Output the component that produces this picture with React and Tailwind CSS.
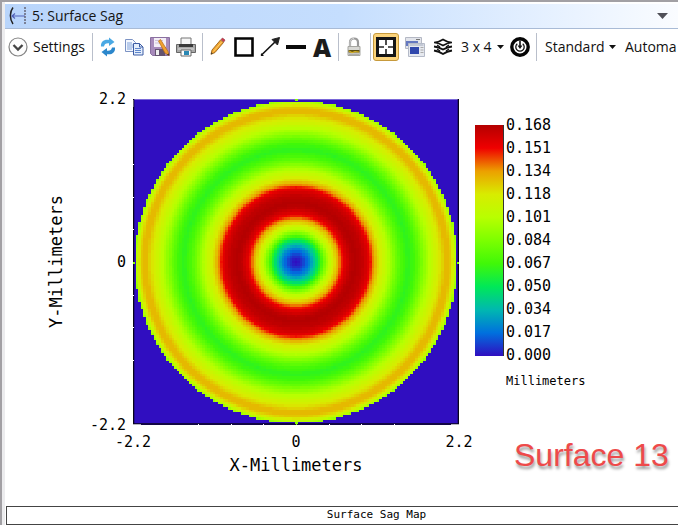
import React from "react";

const COLORS = [
  [48, 14, 192],
  [0, 112, 222],
  [0, 184, 176],
  [0, 232, 88],
  [64, 248, 8],
  [124, 255, 0],
  [184, 255, 0],
  [216, 236, 0],
  [236, 160, 0],
  [240, 0, 0],
  [180, 0, 0],
];

const LEGEND = ["0.168", "0.151", "0.134", "0.118", "0.101", "0.084", "0.067", "0.050", "0.034", "0.017", "0.000"];

// Radial sag profile: [radius, level], radius in 1/163 of the half width.
const PROFILE = [
  [0, 0], [3, 0.1], [8, 0.6], [12, 1.1], [16, 1.8], [20, 2.6], [24, 3.6], [28, 4.8],
  [33, 6.1], [38, 7.1], [42, 7.8], [46, 8.8], [50, 9.4], [55, 9.9], [59, 10], [66, 9.8],
  [71, 9.4], [74, 9], [77, 8.2], [81, 7.4], [86, 6.7], [93, 5.8], [100, 4.8],
  [106, 4.1], [112, 3.7], [118, 4], [124, 4.7], [132, 5.8], [140, 6.7], [146, 7.3],
  [149, 7.7], [153, 7.7], [156, 7.2], [158, 6.7], [161, 5.5], [170, 5],
];

function levelAt(r) {
  for (let i = 1; i < PROFILE.length; i++) {
    const [r1, v1] = PROFILE[i];
    const [r0, v0] = PROFILE[i - 1];
    if (r <= r1) return v0 + ((v1 - v0) * (r - r0)) / (r1 - r0);
  }
  return 5;
}

function colorAt(v) {
  const i = Math.min(9, Math.floor(v));
  const f = v - i;
  const c = COLORS[i].map((a, k) => Math.round(a + (COLORS[i + 1][k] - a) * f));
  return `rgb(${c.join(",")})`;
}

const N = 127;
const CELLS = (() => {
  const groups = {};
  for (let y = 0; y < N; y++) {
    for (let x = 0; x < N; x++) {
      const r = (Math.hypot(x - 63, y - 63) * 163) / 63.5;
      if (r > 161.5) continue;
      const q = Math.round(levelAt(r) * 12);
      groups[q] = (groups[q] || "") + `M${x} ${y}h1v1h-1z`;
    }
  }
  return Object.entries(groups);
})();

function SagMap() {
  const ticks = [0.2, 0.3, 0.4, 0.5, 0.6, 0.7, 0.8];
  return (
    <svg viewBox="0 0 326 326" className="block w-full" role="img" aria-label="Surface sag map">
      <rect width="326" height="326" fill="#300ec0" />
      <g transform={`scale(${326 / N})`} shapeRendering="crispEdges">
        {CELLS.map(([q, d]) => (
          <path key={q} d={d} fill={colorAt(q / 12)} />
        ))}
      </g>
      <path d="M0 .5H326" stroke="#7a68d8" />
      <path d="M.5 0V326M325.5 0V326M0 325H326" stroke="#08041c" strokeWidth="1.6" fill="none" />
      <path d="M0 1V8M0 325.5H8M318 325.5H326" stroke="#b4b4bc" strokeWidth="1" />
      {ticks.map((t) => (
        <g key={t} fill={t === 0.5 ? "#8f0" : "#fff"}>
          <rect x={Math.round(t * 326)} y="325" width="1" height="1" />
          <rect x="0" y={Math.round(t * 326)} width="1" height="1" />
        </g>
      ))}
      <path d="M162 1h3M0 164h2M324 164h2M162 324h3" stroke="#8f0" strokeWidth="2" />
    </svg>
  );
}

function Icon({ size = 20, children }) {
  return (
    <svg width={size} height={size} viewBox="0 0 20 20" fill="none" aria-hidden="true">
      {children}
    </svg>
  );
}

function ToolButton({ label, active, children }) {
  return (
    <button
      type="button"
      aria-label={label}
      className={
        active
          ? "flex h-7 w-[26px] shrink-0 items-center justify-center rounded-[3px] border border-[#c79a3c] bg-[#fbd37a]"
          : "flex h-7 w-[26px] shrink-0 items-center justify-center"
      }
    >
      {children}
    </button>
  );
}

function Separator() {
  return <div className="mr-[2px] ml-[3px] h-7 w-px shrink-0 bg-[#b9bfcb]" />;
}

function Caret() {
  return (
    <svg width="7" height="4" viewBox="0 0 7 4" aria-hidden="true">
      <path d="M0 0h7L3.500 4z" fill="#111" />
    </svg>
  );
}

function Toolbar() {
  return (
    <div className="flex h-[35px] items-center overflow-hidden pl-[3px] text-sm whitespace-nowrap text-[#111]">
      <button type="button" className="flex shrink-0 items-center gap-[5px] pr-[2px]">
        <Icon>
          <circle cx="10" cy="10" r="9" fill="#fdfdfd" stroke="#858585" strokeWidth="1.200" />
          <path d="M5.500 8l4.500 4.500L14.500 8" stroke="#444" strokeWidth="2.300" />
        </Icon>
        <span className="w-[54px] text-left">Settings</span>
      </button>
      <Separator />
      <ToolButton label="Refresh">
        <Icon>
          <path d="M3 9.500C2.500 4.500 6 2 11 2.800V.500l5.500 4.500L11 9V6.300C8 6 6.500 7 6 9.500z" fill="#4aa9e4" />
          <path d="M17 10.500c.500 5-3 7.500-8 6.700v2.300L3.500 15 9 11v2.700c3 .300 4.500-.700 5-3.200z" fill="#2b87cc" />
        </Icon>
      </ToolButton>
      <ToolButton label="Copy">
        <Icon>
          <path d="M1.500 2.500h7l3 3v9h-10z" fill="#f4f8ff" stroke="#7c93c4" />
          <path d="M3 6h5M3 8h6M3 10h6M3 12h5" stroke="#7fa0d8" />
          <path d="M9.500 6.500h6l3.500 3.500v8h-9.500z" fill="#e4eefc" stroke="#3c5ca4" />
          <path d="M15.500 6.500V10H19" stroke="#3c5ca4" />
          <path d="M11 11.500h6M11 13.500h6M11 15.500h6" stroke="#5f86cc" />
        </Icon>
      </ToolButton>
      <ToolButton label="Save">
        <Icon>
          <path d="M.5.500h19v18h-17l-2-2z" fill="#a78abb" stroke="#8a70a0" />
          <path d="M4 1h12v9H4z" fill="#f3edf6" />
          <path d="M5 3.500h8M5 6h8" stroke="#cfc4d8" />
          <path d="M5 12h10v7H5z" fill="#64536f" />
          <path d="M6 13h3v5H6z" fill="#eee" />
          <path d="M8.500 4l2-1.500 7.500 12 1 4-4-2.500z" fill="#f0a030" stroke="#b86c14" strokeWidth=".7" />
          <path d="M19 18.500l-2-1 1.500-1z" fill="#222" />
        </Icon>
      </ToolButton>
      <ToolButton label="Print">
        <Icon>
          <path d="M5 1h10v7H5z" fill="#f6f6f6" stroke="#777" />
          <path d="M.5 7.500h19v8H.5z" fill="#a8a8a8" stroke="#666" />
          <path d="M3 7h14v3H3z" fill="#3a3a3a" />
          <path d="M2 12h16" stroke="#ddd" />
          <path d="M5 13h10v6H5z" fill="#fff" stroke="#666" />
          <path d="M8 14h5v4H8z" fill="#2a88b4" />
        </Icon>
      </ToolButton>
      <Separator />
      <ToolButton label="Pencil">
        <Icon>
          <path d="M12.500 3l3 2.500L7 15.500l-4 1.800 1-4.300z" fill="#f1a431" stroke="#9a6216" strokeWidth=".9" />
          <path d="M5.500 14.500L14 4.500" stroke="#ffd26a" />
          <path d="M13 2.500l1.500-1.500 2.500 2-1.200 2z" fill="#d23a4a" stroke="#84313c" strokeWidth=".6" />
          <path d="M3 17.300l.5-2 1.300 1.200z" fill="#333" />
        </Icon>
      </ToolButton>
      <ToolButton label="Rectangle">
        <Icon>
          <path d="M1.500 1.500h17v17h-17z" stroke="#050505" strokeWidth="2.600" />
        </Icon>
      </ToolButton>
      <ToolButton label="Arrow">
        <Icon>
          <path d="M1 18.500L16 4" stroke="#111" strokeWidth="1.600" />
          <path d="M19.500.500l-2 7.500-5.500-5.500z" fill="#222" stroke="#222" />
          <path d="M1 16l3 3H1z" fill="#111" />
        </Icon>
      </ToolButton>
      <ToolButton label="Line">
        <Icon>
          <path d="M0 8h20v4H0z" fill="#0a0a0a" />
        </Icon>
      </ToolButton>
      <ToolButton label="Text">
        <span className="font-['Open_Sans',sans-serif] text-[25px] leading-6 font-extrabold text-[#1c1c1c]">A</span>
      </ToolButton>
      <Separator />
      <ToolButton label="Lock">
        <Icon>
          <path d="M6 10V5.500C6 2.800 7.500 1.500 10 1.500s4 1.300 4 4V10" stroke="#999" strokeWidth="2.200" />
          <path d="M6 9V5.500C6 2.800 7.500 1.500 10 1.500" stroke="#d4d4d4" strokeWidth="1" />
          <path d="M4 9.500h12v9H4z" fill="#d8d8d4" stroke="#a5a5a0" />
          <path d="M4.500 13h11v2.500h-11z" fill="#5a4c12" />
          <path d="M5 14l3 1.500 3-1 4 .5" stroke="#d8b020" strokeWidth="1.200" />
          <path d="M5 17.200h10" stroke="#999" />
        </Icon>
      </ToolButton>
      <Separator />
      <ToolButton label="Fit to window" active>
        <svg width="20" height="20" viewBox="0 0 20 20" className="shrink-0" aria-hidden="true">
          <path d="M1.500 1.500h17v17h-17z" fill="#fff" stroke="#151515" strokeWidth="3" />
          <path d="M10 3v5M10 12v5M3 10h5M12 10h5" stroke="#222" strokeWidth="1.600" />
        </svg>
      </ToolButton>
      <div className="ml-[3px] flex shrink-0 gap-[2px]">
        <ToolButton label="Windows">
          <Icon>
            <path d="M.5.500h16v11H.5z" fill="#e2e4ea" stroke="#b4b8c4" />
            <path d="M1 4h12v5H1z" fill="#6478c0" />
            <path d="M11 2.500h4" stroke="#777" />
            <path d="M3.500 6.500h16v13h-16z" fill="#e6e9ef" stroke="#b4bac8" />
            <path d="M4.500 8h14" stroke="#a0a8ba" />
            <path d="M5 10h9v7H5z" fill="#3048ac" />
            <path d="M15.500 10.500h3M15.500 13h3M15.500 15.500h3" stroke="#aaa" />
          </Icon>
        </ToolButton>
        <ToolButton label="Layers">
          <Icon>
            <path d="M1 5.500c3 0 6-1 9-3 3 2 6 3 9 3-3 0-6 1.200-9 3-3-1.800-6-3-9-3z" stroke="#111" strokeWidth="1.700" />
            <path d="M1 9.500c3 .300 6 1.300 9 3 3-1.700 6-2.700 9-3M1 13.500c3 .500 6 1.500 9 3.500 3-2 6-3 9-3.500" stroke="#111" strokeWidth="1.800" />
            <path d="M4 8l3 2M16 8l-3 2M4 12l3 2M16 12l-3 2" stroke="#111" strokeWidth="1.300" />
          </Icon>
        </ToolButton>
      </div>
      <button type="button" className="ml-[5px] flex shrink-0 items-center gap-1">
        <span className="w-8 text-left">3 x 4</span>
        <Caret />
      </button>
      <div className="ml-[3px] flex shrink-0 items-center">
        <ToolButton label="Reset">
          <Icon>
            <circle cx="10" cy="10" r="8.200" stroke="#050505" strokeWidth="3.400" fill="#fff" />
            <path d="M7.300 6.800a4.200 4.200 0 1 0 5.400 0" stroke="#111" strokeWidth="1.300" />
            <path d="M10 3.500V9" stroke="#111" strokeWidth="1.600" />
            <path d="M7.500 8.500h5L10 12z" fill="#111" />
          </Icon>
        </ToolButton>
        <Separator />
      </div>
      <button type="button" className="ml-[6px] flex shrink-0 items-center gap-1">
        <span className="w-[60px] text-left">Standard</span>
        <Caret />
      </button>
      <button type="button" className="ml-[9px] shrink-0">Automa</button>
    </div>
  );
}

export default function App() {
  return (
    <div className="flex h-screen flex-col border-t-2 border-l-2 border-[#a2a0a4] bg-white font-['Open_Sans','Noto_Sans',sans-serif] text-black">
      <div className="flex min-h-0 flex-1 flex-col border-l-[3px] border-[#ececee] pt-[2px]">
        <header className="flex h-[25px] shrink-0 items-center border-b border-[#a9bbd6] bg-linear-to-r from-[#b9d5fb] via-[#c5defe] to-[#fafcff] pr-[10px] pl-1">
          <svg width="18" height="20" viewBox="0 0 18 20" fill="none" aria-hidden="true">
            <path d="M4 1.500C.500 6 .500 13 4 18" stroke="#222" strokeWidth="1.500" />
            <path d="M3 10h13M6 7.500L3 10l3 2.500" stroke="#5262b8" strokeWidth="1.200" />
            <path d="M16 1v18" stroke="#667" strokeWidth="1.500" strokeDasharray="2 1" />
          </svg>
          <h1 className="ml-[5px] flex-1 text-sm text-[#151515]">5: Surface Sag</h1>
          <button type="button" aria-label="Window menu">
            <svg width="11" height="6" viewBox="0 0 11 6" aria-hidden="true">
              <path d="M0 0h11L5.500 6z" fill="#505058" />
            </svg>
          </button>
        </header>
        <Toolbar />
        <main className="flex min-h-0 flex-1 items-start pt-[26px] pl-[41px] font-['DejaVu_Sans_Mono',monospace]">
          <div className="flex h-[344px] w-5 shrink-0 items-center justify-center">
            <span className="rotate-180 text-[17px] leading-5 whitespace-nowrap [writing-mode:vertical-rl]">Y-Millimeters</span>
          </div>
          <div className="ml-6 flex h-[344px] w-9 shrink-0 flex-col justify-between text-right text-[15px] leading-[18px]">
            <span>2.2</span>
            <span>0</span>
            <span>-2.2</span>
          </div>
          <div className="mt-[9px] ml-[7px] w-[326px] shrink-0">
            <SagMap />
            <div className="-mx-5 mt-2 flex justify-between text-center text-[15px] leading-[18px]">
              <span className="w-10">-2.2</span>
              <span className="w-10">0</span>
              <span className="w-10">2.2</span>
            </div>
            <p className="mt-1 text-center text-[17px] leading-5">X-Millimeters</p>
          </div>
          <div className="mt-6 ml-4 min-w-0 flex-1">
            <div className="flex">
              <div className="my-[11px] w-[29px] shrink-0 border-r border-[#333] bg-[linear-gradient(to_bottom,#b40000,#f00000_10%,#eca000_20%,#d8ec00_30%,#b8ff00_40%,#7cff00_50%,#40f808_60%,#00e858_70%,#00b8b0_80%,#0070de_90%,#300ec0)]" />
              <ul className="ml-[2px] text-[15px] leading-[23px]">
                {LEGEND.map((v) => (
                  <li key={v}>{v}</li>
                ))}
              </ul>
            </div>
            <p className="mt-[6px] ml-[31px] text-xs leading-4">Millimeters</p>
            <p className="mt-12 ml-[39px] font-['Liberation_Sans',sans-serif] text-[32px] leading-9 whitespace-nowrap text-[#ee4a4a] [text-shadow:1px_3px_3px_#999]">
              Surface 13
            </p>
          </div>
        </main>
        <footer className="ml-px h-[19px] shrink-0 border-y border-l border-[#444] bg-white pl-[68px] text-center font-['DejaVu_Sans_Mono',monospace] text-[11px] leading-[15px]">
          Surface Sag Map
        </footer>
      </div>
    </div>
  );
}
